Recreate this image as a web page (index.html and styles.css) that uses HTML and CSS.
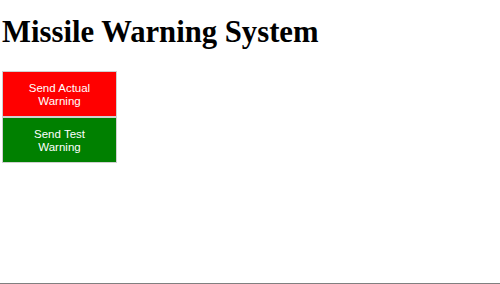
FILE: index.html
```html
<!DOCTYPE html>
<html lang="en">
<head>
    <meta charset="UTF-8">
    <title>Missile Warning System</title>
    <link rel="stylesheet" href="styles.css">
</head>
<body>
    <h1>Missile Warning System</h1>
    <div class="buttons">
        <button class="btn actual">Send Actual<br>Warning</button>
        <button class="btn test">Send Test<br>Warning</button>
    </div>
</body>
</html>
```

FILE: styles.css
```css
html, body {
    height: 100%;
}
body {
    margin: 0;
    padding: 0 2px;
    box-sizing: border-box;
    border-bottom: 1px solid #808080;
    background-color: #fff;
    font-family: "Liberation Serif", serif;
}
h1 {
    margin: 0;
    padding-top: 15px;
    font-size: 30.7px;
    line-height: 34px;
    font-weight: bold;
    color: #000;
}
.buttons {
    margin-top: 22px;
    width: 115px;
}
.btn {
    display: block;
    width: 115px;
    height: 46px;
    margin: 0;
    padding: 2px 0 0;
    border: 1px solid #d0d0d0;
    color: #fff;
    font-family: "Liberation Sans", Arial, sans-serif;
    font-size: 11.5px;
    line-height: 13px;
    text-align: center;
}
.actual {
    background-color: #ff0000;
}
.test {
    background-color: #008000;
}
```
